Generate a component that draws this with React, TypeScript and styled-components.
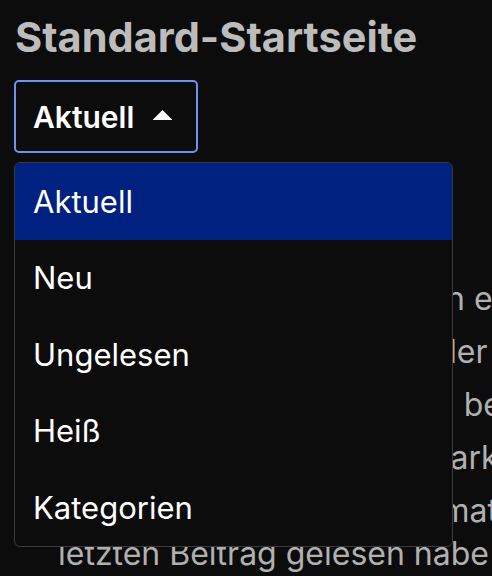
import styled, { createGlobalStyle } from "styled-components";
import { useState } from "react";

const GlobalStyle = createGlobalStyle`
html, body {
  margin: 0;
  padding: 0;
  background: #0c0c0c;
  overflow: hidden;
}
body {
  font-family: Inter, "Noto Sans", sans-serif;
  color: #fff;
}
`

const Page = styled.div`
  width: 492px;
  height: 576px;
  padding: 13px 0 0 15px;
  box-sizing: border-box;
`

const Heading = styled.h2`
  margin: 0;
  font-size: 41.5px;
  line-height: 48px;
  font-weight: 700;
  color: #bcbcbc;
`

const SelectWrap = styled.div`
  position: relative;
  margin: 19px 0 0 -1px;
`

const SelectButton = styled.button`
  display: flex;
  align-items: center;
  gap: 18px;
  height: 73px;
  padding: 0 23px 0 17px;
  background: #0c0c0c;
  border: 2px solid #6f93f2;
  border-radius: 5px;
  color: #fff;
  font-family: Inter, sans-serif;
  font-size: 30px;
  font-weight: 600;
  cursor: pointer;
`

const Caret = styled.svg`
  width: 21px;
  height: 12px;
  margin-top: -4px;
`

const Menu = styled.ul`
  position: absolute;
  top: 82px;
  left: 0;
  width: 439px;
  margin: 0;
  padding: 0;
  list-style: none;
  box-sizing: border-box;
  background: #0c0c0c;
  border: 1px solid #3a3a3a;
  border-radius: 6px;
  overflow: hidden;
  z-index: 2;
`

const Item = styled.li<{ $active?: boolean }>`
  display: flex;
  align-items: center;
  height: 76.5px;
  padding: 0 18px;
  font-size: 31px;
  font-weight: 400;
  color: #fff;
  background: ${p => (p.$active ? "#00217f" : "transparent")};
`

const Options = styled.div`
  margin-top: 124px;
  display: flex;
  flex-direction: column;
  gap: 10px;
`

const OptionRow = styled.label`
  display: flex;
  align-items: flex-start;
  gap: 18px;
  color: #b0b0b0;
  font-size: 32px;
  line-height: 43px;
  white-space: nowrap;
`

const Box = styled.span`
  flex: none;
  width: 22px;
  height: 22px;
  margin-top: 11px;
  border: 2px solid #888;
  border-radius: 3px;
`

const options = [
  ["Links zu externen Seiten in einem neuen Tab öffnen"],
  ["Anzahl neuer Beiträge in der Titelleiste anzeigen"],
  ["Suchbegriffe in Antworten beim Laden hervorheben"],
  ["Zitier-Schaltfläche über markiertem Text anzeigen"],
  ["Angepinnte Beiträge automatisch lösen, wenn ich den", "letzten Beitrag gelesen habe"],
]

export default function App() {
  const [open, setOpen] = useState(true);
  const items = ["Aktuell", "Neu", "Ungelesen", "Heiß", "Kategorien"];

  return (
    <>
      <GlobalStyle />
      <Page>
        <Heading>Standard-Startseite</Heading>
        <SelectWrap>
          <SelectButton onClick={() => setOpen(!open)}>
            Aktuell
            <Caret viewBox="0 0 21 12">
              <path d="M10.5 1 L20 10.5 Q20.5 11 19.8 11 L1.2 11 Q0.5 11 1 10.5 Z" fill="#fff" />
            </Caret>
          </SelectButton>
          {open && (
            <Menu>
              {items.map((it, i) => (
                <Item key={it} $active={i === 0}>{it}</Item>
              ))}
            </Menu>
          )}
          <Options>
            {options.map((lines, i) => (
              <OptionRow key={i}>
                <Box />
                <span>
                  {lines.map((l, j) => (
                    <div key={j}>{l}</div>
                  ))}
                </span>
              </OptionRow>
            ))}
          </Options>
        </SelectWrap>
      </Page>
    </>
  )
}
